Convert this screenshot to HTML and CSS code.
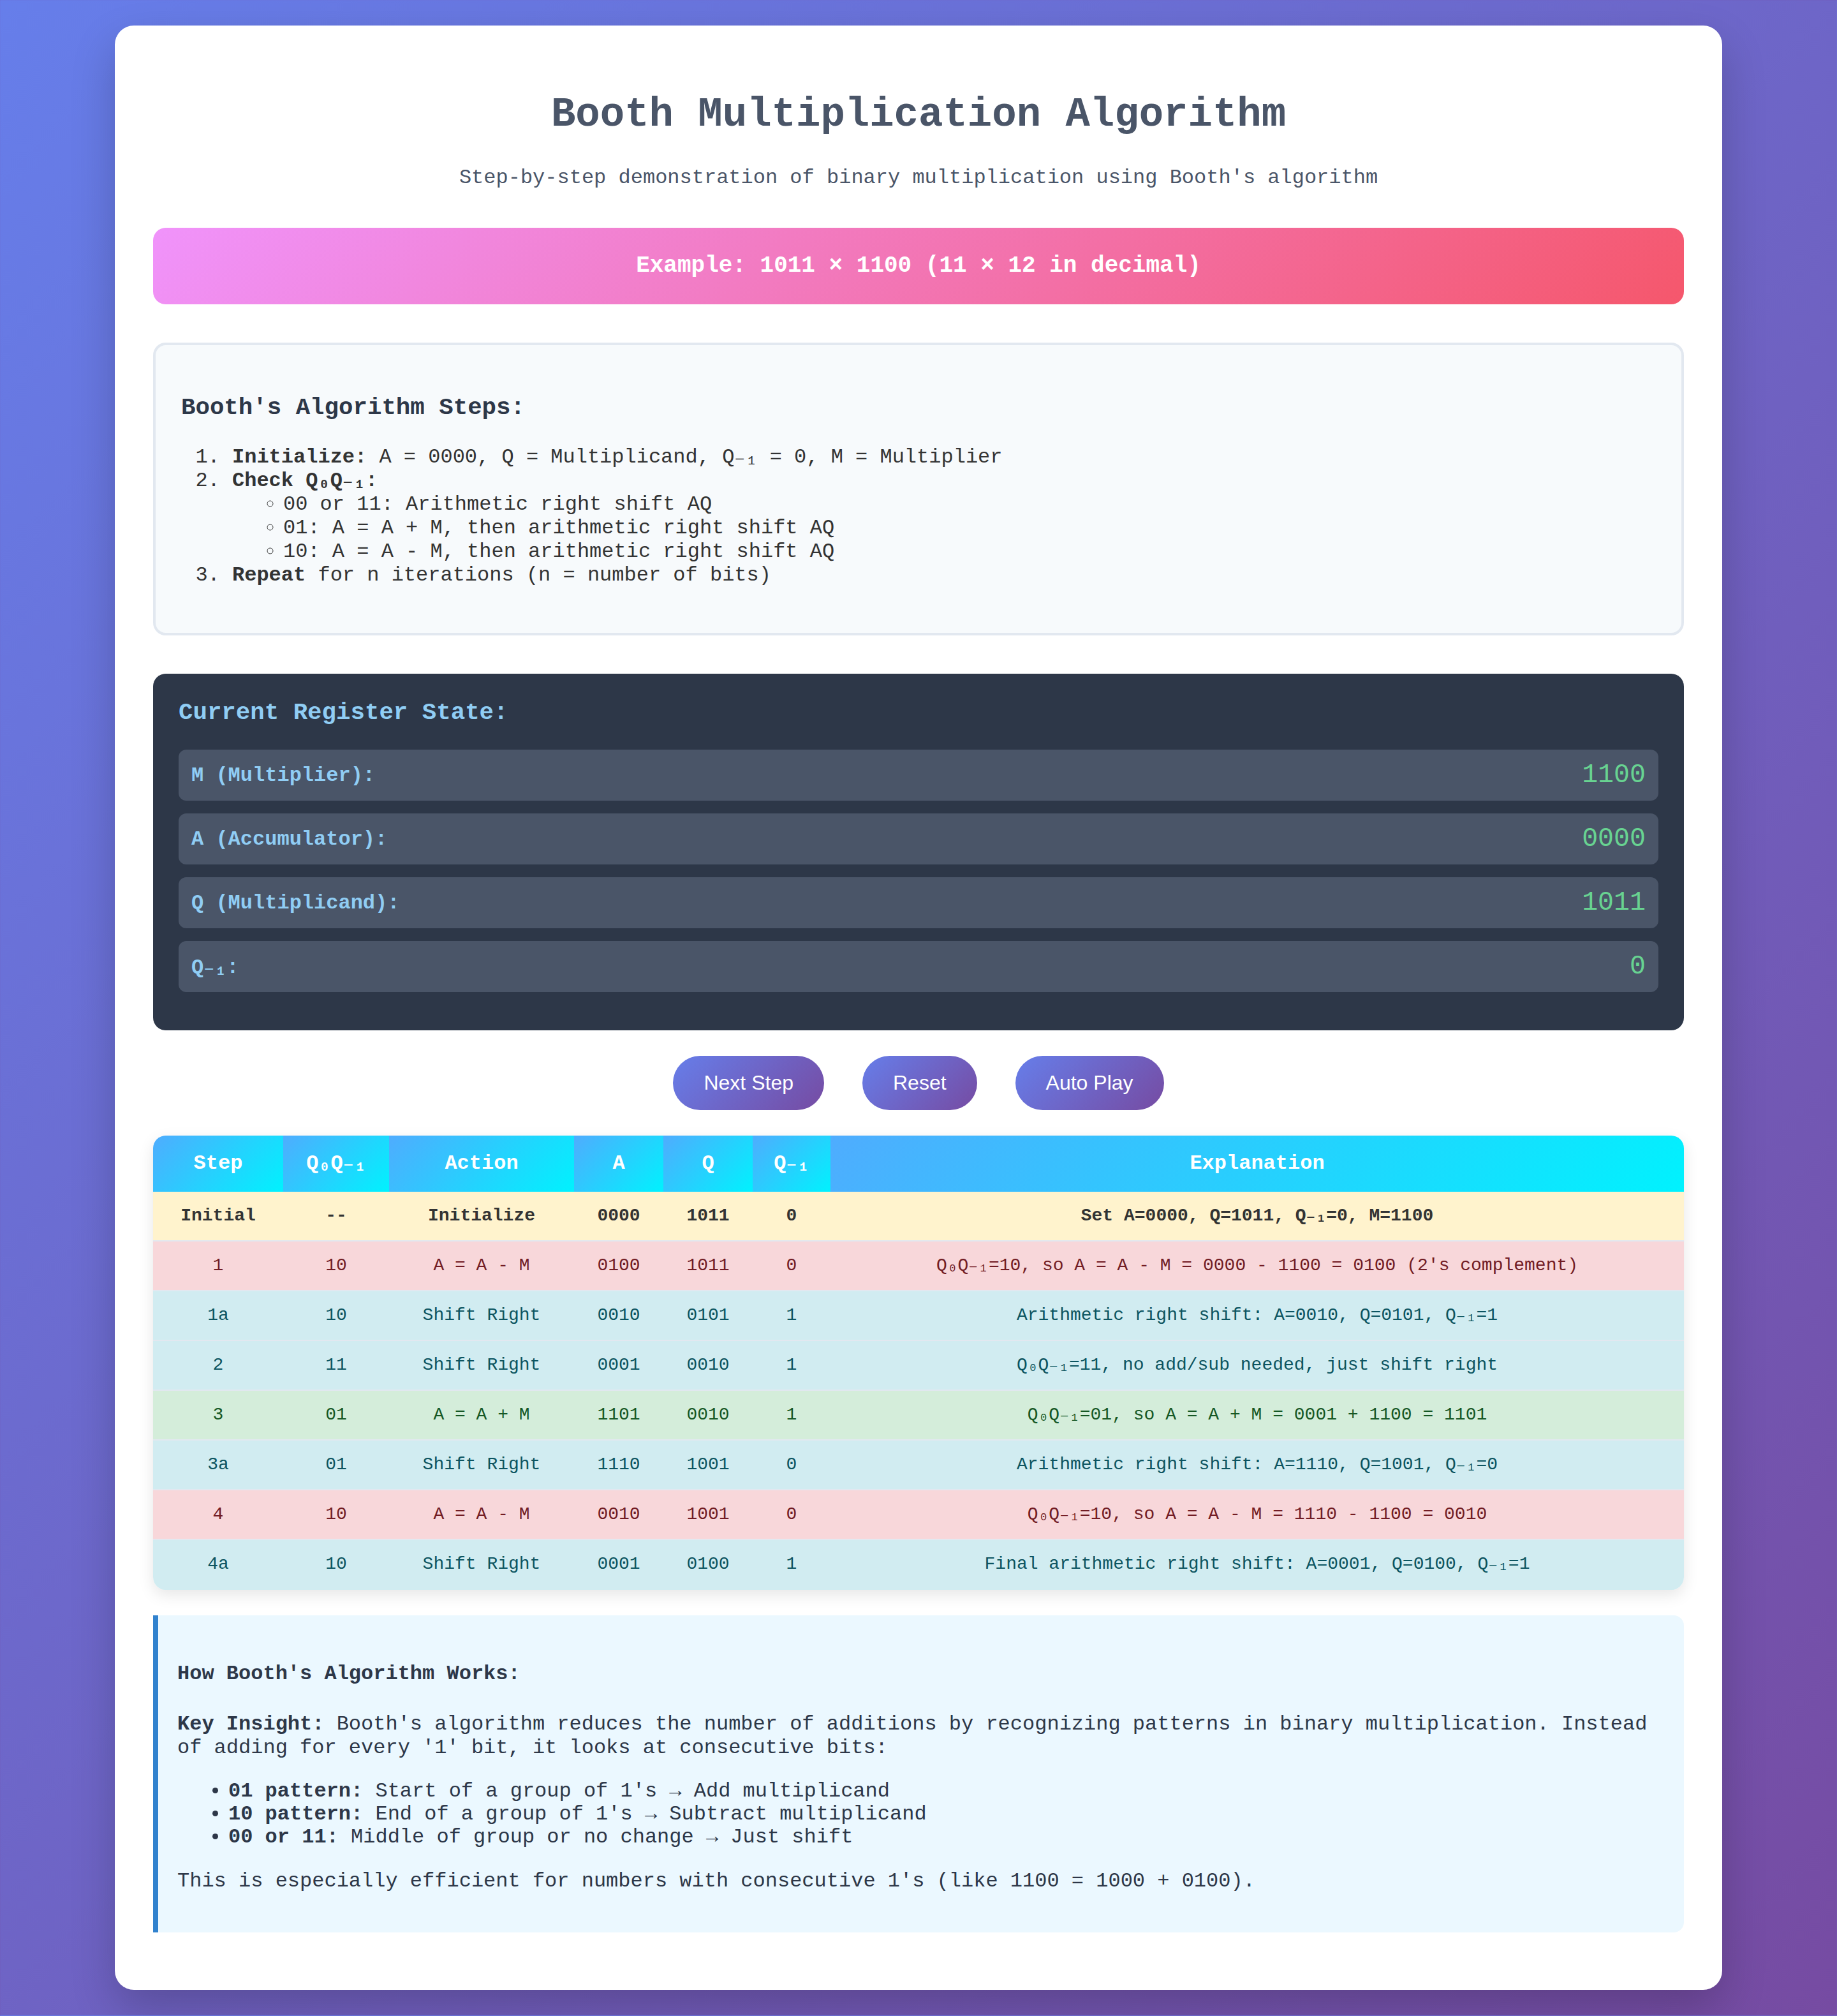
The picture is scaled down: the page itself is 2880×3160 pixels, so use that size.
FILE: index.html
```html
<!DOCTYPE html>
<html lang="en">
<head>
<meta charset="utf-8">
<title>Booth Multiplication Algorithm</title>
<link rel="stylesheet" href="styles.css">
</head>
<body>
<div class="container">
  <header class="header">
    <h1 class="title">Booth Multiplication Algorithm</h1>
    <p class="subtitle">Step-by-step demonstration of binary multiplication using Booth's algorithm</p>
  </header>

  <div class="example">Example: 1011 × 1100 (11 × 12 in decimal)</div>

  <section class="steps">
    <h3 class="steps-title">Booth's Algorithm Steps:</h3>
    <ol class="steps-list">
      <li><strong>Initialize:</strong> A = 0000, Q = Multiplicand, Q₋₁ = 0, M = Multiplier</li>
      <li><strong>Check Q₀Q₋₁:</strong>
        <ul>
          <li>00 or 11: Arithmetic right shift AQ</li>
          <li>01: A = A + M, then arithmetic right shift AQ</li>
          <li>10: A = A - M, then arithmetic right shift AQ</li>
        </ul>
      </li>
      <li><strong>Repeat</strong> for n iterations (n = number of bits)</li>
    </ol>
  </section>

  <section class="registers">
    <h3 class="registers-title">Current Register State:</h3>
    <div class="reg-row"><span class="reg-label">M (Multiplier):</span><span class="reg-value">1100</span></div>
    <div class="reg-row"><span class="reg-label">A (Accumulator):</span><span class="reg-value">0000</span></div>
    <div class="reg-row"><span class="reg-label">Q (Multiplicand):</span><span class="reg-value">1011</span></div>
    <div class="reg-row"><span class="reg-label">Q₋₁:</span><span class="reg-value">0</span></div>
  </section>

  <div class="controls">
    <button class="btn">Next Step</button>
    <button class="btn">Reset</button>
    <button class="btn">Auto Play</button>
  </div>

  <table class="trace">
    <thead>
      <tr>
        <th class="col-step">Step</th>
        <th class="col-bits">Q₀Q₋₁</th>
        <th class="col-action">Action</th>
        <th class="col-a">A</th>
        <th class="col-q">Q</th>
        <th class="col-q1">Q₋₁</th>
        <th class="col-exp">Explanation</th>
      </tr>
    </thead>
    <tbody>
      <tr class="row-init">
        <td>Initial</td><td>--</td><td>Initialize</td><td>0000</td><td>1011</td><td>0</td>
        <td>Set A=0000, Q=1011, Q₋₁=0, M=1100</td>
      </tr>
      <tr class="row-sub">
        <td>1</td><td>10</td><td>A = A - M</td><td>0100</td><td>1011</td><td>0</td>
        <td>Q₀Q₋₁=10, so A = A - M = 0000 - 1100 = 0100 (2's complement)</td>
      </tr>
      <tr class="row-shift">
        <td>1a</td><td>10</td><td>Shift Right</td><td>0010</td><td>0101</td><td>1</td>
        <td>Arithmetic right shift: A=0010, Q=0101, Q₋₁=1</td>
      </tr>
      <tr class="row-shift">
        <td>2</td><td>11</td><td>Shift Right</td><td>0001</td><td>0010</td><td>1</td>
        <td>Q₀Q₋₁=11, no add/sub needed, just shift right</td>
      </tr>
      <tr class="row-add">
        <td>3</td><td>01</td><td>A = A + M</td><td>1101</td><td>0010</td><td>1</td>
        <td>Q₀Q₋₁=01, so A = A + M = 0001 + 1100 = 1101</td>
      </tr>
      <tr class="row-shift">
        <td>3a</td><td>01</td><td>Shift Right</td><td>1110</td><td>1001</td><td>0</td>
        <td>Arithmetic right shift: A=1110, Q=1001, Q₋₁=0</td>
      </tr>
      <tr class="row-sub">
        <td>4</td><td>10</td><td>A = A - M</td><td>0010</td><td>1001</td><td>0</td>
        <td>Q₀Q₋₁=10, so A = A - M = 1110 - 1100 = 0010</td>
      </tr>
      <tr class="row-shift">
        <td>4a</td><td>10</td><td>Shift Right</td><td>0001</td><td>0100</td><td>1</td>
        <td>Final arithmetic right shift: A=0001, Q=0100, Q₋₁=1</td>
      </tr>
    </tbody>
  </table>

  <section class="info">
    <h4 class="info-title">How Booth's Algorithm Works:</h4>
    <p><strong>Key Insight:</strong> Booth's algorithm reduces the number of additions by recognizing patterns in binary multiplication. Instead of adding for every '1' bit, it looks at consecutive bits:</p>
    <ul class="info-list">
      <li><strong>01 pattern:</strong> Start of a group of 1's → Add multiplicand</li>
      <li><strong>10 pattern:</strong> End of a group of 1's → Subtract multiplicand</li>
      <li><strong>00 or 11:</strong> Middle of group or no change → Just shift</li>
    </ul>
    <p>This is especially efficient for numbers with consecutive 1's (like 1100 = 1000 + 0100).</p>
  </section>
</div>
</body>
</html>
```

FILE: styles.css
```css
html {
  zoom: 2;
}

body {
  margin: 0;
  padding: 20px;
  font-family: "Liberation Mono", "Courier New", "DejaVu Sans", monospace;
  font-size: 16px;
  color: #333;
  background: linear-gradient(135deg, #667eea 0%, #764ba2 100%);
}

.container {
  max-width: 1200px;
  margin: 0 auto;
  padding: 30px;
  background: #ffffff;
  border-radius: 15px;
  box-shadow: 0 15px 35px rgba(0, 0, 0, 0.2);
}

.header {
  text-align: center;
  margin-bottom: 30px;
}

.title {
  font-size: 32px;
  margin: 22px 0;
  color: #4a5568;
}

.subtitle {
  margin: 16px 0;
  color: #4a5568;
}

.example {
  background: linear-gradient(135deg, #f093fb 0%, #f5576c 100%);
  color: #ffffff;
  font-weight: bold;
  font-size: 18px;
  line-height: 20px;
  text-align: center;
  padding: 20px;
  border-radius: 10px;
  margin-bottom: 30px;
}

.steps {
  background: #f7fafc;
  border: 2px solid #e2e8f0;
  border-radius: 10px;
  padding: 20px;
  margin-bottom: 30px;
}

.steps-title {
  color: #2d3748;
}

.steps-list {
  margin: 16px 0;
  line-height: 18.5px;
}

.registers {
  background: #2d3748;
  border-radius: 10px;
  padding: 20px;
  margin-bottom: 20px;
}

.registers-title {
  margin: 0 0 18.72px;
  color: #90cdf4;
}

.reg-row {
  display: flex;
  justify-content: space-between;
  align-items: center;
  background: #4a5568;
  border-radius: 6px;
  padding: 8px 10px;
  margin-bottom: 10px;
}

.reg-label {
  color: #90cdf4;
  font-weight: bold;
}

.reg-value {
  color: #68d391;
  font-size: 20.8px;
  line-height: 24px;
}

.controls {
  display: flex;
  justify-content: center;
  gap: 30px;
  margin-bottom: 20px;
}

.btn {
  font-family: "Liberation Sans", Arial, sans-serif;
  font-size: 16px;
  color: #ffffff;
  background: linear-gradient(135deg, #667eea 0%, #764ba2 100%);
  border: none;
  border-radius: 25px;
  padding: 12px 24px;
  cursor: pointer;
}

.trace {
  width: 100%;
  table-layout: fixed;
  border-collapse: separate;
  border-spacing: 0;
  border-radius: 10px;
  overflow: hidden;
  box-shadow: 0 4px 12px rgba(0, 0, 0, 0.1);
  margin-bottom: 20px;
  font-size: 14px;
}

.trace th {
  box-sizing: border-box;
  background: linear-gradient(135deg, #4facfe 0%, #00f2fe 100%);
  color: #ffffff;
  font-size: 16px;
  font-weight: bold;
  padding: 12px 8px;
  line-height: 20px;
  text-align: center;
}

.col-step { width: 102px; }
.col-bits { width: 83px; }
.col-action { width: 145px; }
.col-a { width: 70px; }
.col-q { width: 70px; }
.col-q1 { width: 61px; }

.trace td {
  padding: 11px 8px;
  line-height: 16px;
  text-align: center;
  border-bottom: 1px solid #e2e8f0;
  white-space: nowrap;
}

.trace tbody tr:last-child td {
  border-bottom: 1px solid #d1ecf1;
}

.row-init td {
  background: #fff3cd;
  color: #333333;
  font-weight: bold;
}

.row-sub td {
  background: #f8d7da;
  color: #721c24;
}

.row-shift td {
  background: #d1ecf1;
  color: #0c5460;
}

.row-add td {
  background: #d4edda;
  color: #155724;
}

.info {
  background: #ebf8ff;
  border-left: 4px solid #3182ce;
  border-radius: 0 8px 8px 0;
  padding: 15px;
  margin-bottom: 15px;
  color: #2d3748;
}

.info-title {
  color: #2d3748;
}

.info-list {
  line-height: 18px;
}
```
